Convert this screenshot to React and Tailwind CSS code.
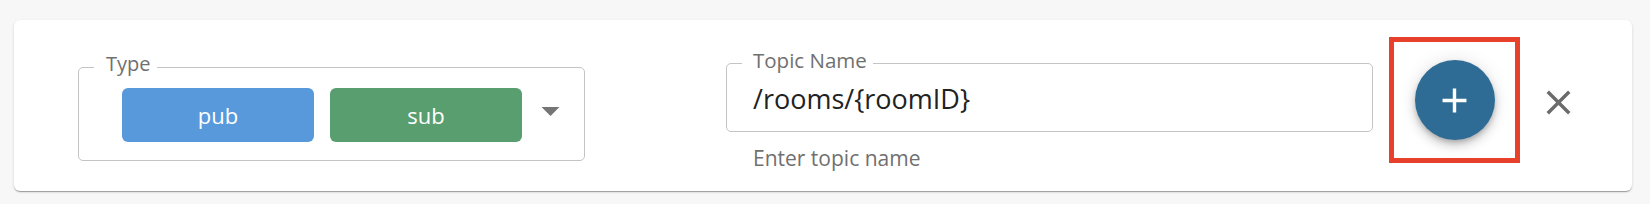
export default function App() {
  const font = { fontFamily: '"Open Sans", "Noto Sans", sans-serif' };

  return (
    <div className="w-[1650px] h-[204px] bg-[#f7f7f7] pt-[20px] pl-[14px]" style={font}>
      <div className="flex items-start w-[1618px] h-[171px] bg-white rounded-[6px] shadow-[0_2px_1px_-1px_rgba(0,0,0,0.2),0_1px_1px_0_rgba(0,0,0,0.14),0_1px_3px_0_rgba(0,0,0,0.12)]">
        {/* Type selector */}
        <div className="relative ml-[64px] mt-[47px] w-[507px] h-[94px] border border-[#c4c4c4] rounded-[5px] flex items-start pl-[43px] pt-[20px]">
          <span className="absolute left-[15px] top-[-14px] bg-white pl-[12px] pr-[6px] text-[20px] leading-[20px] text-[#707070]">
            Type
          </span>
          <div className="w-[192px] h-[54px] rounded-[6px] bg-[#5899db] text-white text-[22px] flex items-center justify-center">
            pub
          </div>
          <div className="ml-[16px] w-[192px] h-[54px] rounded-[6px] bg-[#589e6f] text-white text-[22px] flex items-center justify-center">
            sub
          </div>
          <svg viewBox="0 0 24 24" className="ml-[7px] mt-[1px] w-[43px] h-[43px]" fill="#757575">
            <path d="M7 10l5 5 5-5z" />
          </svg>
        </div>

        {/* Topic name */}
        <div className="ml-[141px] mt-[43px] w-[647px]">
          <div className="relative h-[69px] border border-[#c4c4c4] rounded-[5px] pl-[26px] flex items-center">
            <span className="absolute left-[15px] top-[-14px] bg-white pl-[11px] pr-[6px] text-[20.5px] leading-[20px] text-[#707070]">
              Topic Name
            </span>
            <span className="text-[27px] leading-none text-[#222] mt-[2px]">/rooms/{"{roomID}"}</span>
          </div>
          <div className="pl-[27px] mt-[12px] text-[21px] leading-[28px] text-[#707070]">Enter topic name</div>
        </div>

        {/* add button, highlighted */}
        <div className="ml-[16px] mt-[17px] w-[131px] h-[126px] border-[5px] border-[#e8412b] flex items-center justify-center">
          <button className="w-[80px] h-[80px] rounded-full bg-[#2e6c96] flex items-center justify-center shadow-[0_3px_5px_-1px_rgba(0,0,0,0.2),0_6px_10px_0_rgba(0,0,0,0.14),0_1px_18px_0_rgba(0,0,0,0.12)]">
            <svg viewBox="0 0 24 24" className="w-[41px] h-[41px]" fill="#fff">
              <path d="M19 13h-6v6h-2v-6H5v-2h6V5h2v6h6v2z" />
            </svg>
          </button>
        </div>

        <svg viewBox="0 0 24 24" className="ml-[18px] mt-[62px] w-[41px] h-[41px]" fill="#6b6b6b">
          <path d="M19 6.41 17.59 5 12 10.59 6.41 5 5 6.41 10.59 12 5 17.59 6.41 19 12 13.41 17.59 19 19 17.59 13.41 12z" />
        </svg>
      </div>
    </div>
  );
}
